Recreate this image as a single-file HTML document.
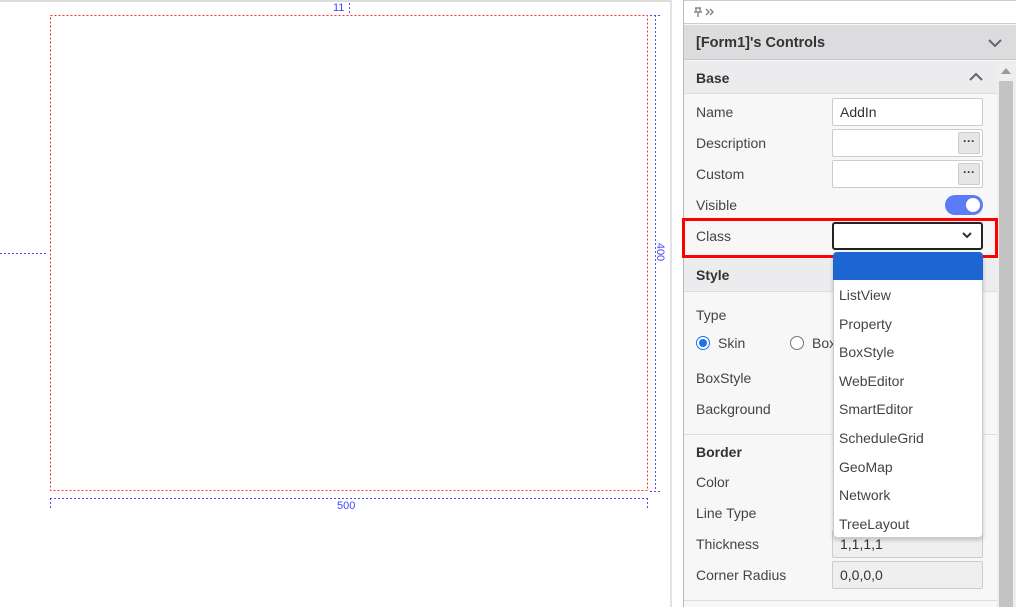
<!DOCTYPE html>
<html><head><style>
*{margin:0;padding:0;box-sizing:border-box}
body{width:1016px;height:607px;overflow:hidden;background:#fff;font-family:"Liberation Sans","Noto Sans CJK KR",sans-serif;position:relative;color:#333}
.a{position:absolute}
.lbl{position:absolute;left:696px;font-size:14px;color:#444}
.inp{position:absolute;left:832px;width:151px;height:28px;border:1px solid #ccc;background:#fff;border-radius:2px;font-size:14px;padding:5px 7px;color:#333}
.dots{position:absolute;right:2px;top:2px;width:22px;height:22px;background:#e6e6e6;border:1px solid #ccc;border-radius:2px;font-size:12px;text-align:center;line-height:16px;font-weight:bold}
.item{position:absolute;left:839px;font-size:14px;color:#444}
.sec{position:absolute;left:696px;font-size:14px;font-weight:bold;color:#333}
</style></head><body>
<div class="a" style="left:0;top:0;width:670px;height:2px;background:#ddd"></div>
<svg class="a" style="left:0;top:0" width="670" height="520" shape-rendering="crispEdges">
<g fill="none" stroke-width="1" stroke-dasharray="2,2">
<rect x="50.5" y="15.5" width="597" height="475" stroke="#ff3030"/>
<g stroke="#4a4aff">
<line x1="655.5" y1="15" x2="655.5" y2="492"/>
<line x1="650" y1="15.5" x2="662" y2="15.5"/>
<line x1="650" y1="491.5" x2="662" y2="491.5"/>
<line x1="50" y1="498.5" x2="648" y2="498.5"/>
<line x1="50.5" y1="498" x2="50.5" y2="508"/>
<line x1="647.5" y1="498" x2="647.5" y2="508"/>
<line x1="0" y1="253.5" x2="48" y2="253.5"/>
<line x1="349.5" y1="3" x2="349.5" y2="13"/>
</g></g></svg>
<div class="a" style="left:333px;top:2px;font-size:11px;color:#44f">11</div>
<div class="a" style="left:337px;top:500px;font-size:11px;color:#44f">500</div>
<div class="a" style="left:651px;top:246px;font-size:11px;color:#44f;transform:rotate(90deg)">400</div>
<div class="a" style="left:670px;top:0;width:2px;height:607px;background:#e3e3e3"></div>
<!-- panel -->
<div class="a" style="left:683px;top:0;width:333px;height:607px;background:#f7f7f8;border-left:1px solid #bbb"></div>
<div class="a" style="left:684px;top:0;width:332px;height:24px;background:#fff;border-bottom:1px solid #ccc;border-top:1px solid #ccc"></div>
<svg class="a" style="left:694px;top:7px" width="24" height="10"><path d="M1 1h6M2 1v4h4v-4M0 5h8M4 5v5" stroke="#888" stroke-width="1.5" fill="none"/><path d="M12 2l3 3-3 3M16 2l3 3-3 3" stroke="#888" stroke-width="1.5" fill="none"/></svg>
<div class="a" style="left:684px;top:25px;width:332px;height:35px;background:#dcdcdf;border-bottom:1px solid #c8c8c8"></div>
<div class="sec" style="top:35px;font-size:14.5px">[Form1]'s Controls</div>
<svg class="a" style="left:988px;top:38px" width="14" height="10"><path d="M1 2l6 6 6-6" stroke="#666" stroke-width="2" fill="none"/></svg>
<div class="a" style="left:684px;top:61px;width:313px;height:33px;background:#ececef;border-bottom:1px solid #ddd"></div>
<div class="sec" style="top:70px">Base</div>
<svg class="a" style="left:969px;top:72px" width="14" height="10"><path d="M1 8l6-6 6 6" stroke="#666" stroke-width="2" fill="none"/></svg>
<div class="a" style="left:997px;top:61px;width:19px;height:546px;background:#eee"></div>
<div class="a" style="left:999px;top:81px;width:14px;height:526px;background:#c3c3c3"></div>
<svg class="a" style="left:1001px;top:68px" width="10" height="6"><path d="M0 6L5 0L10 6Z" fill="#999"/></svg>

<div class="lbl" style="top:104px">Name</div>
<div class="inp" style="top:98px">AddIn</div>
<div class="lbl" style="top:135px">Description</div>
<div class="inp" style="top:129px"><div class="dots">···</div></div>
<div class="lbl" style="top:166px">Custom</div>
<div class="inp" style="top:160px"><div class="dots">···</div></div>
<div class="lbl" style="top:197px">Visible</div>
<div class="a" style="left:945px;top:195px;width:38px;height:20px;border-radius:10px;background:#5b7cf5"></div>
<div class="a" style="left:966px;top:198px;width:14px;height:14px;border-radius:7px;background:#fff"></div>
<div class="lbl" style="top:228px">Class</div>
<div class="a" style="left:832px;top:222px;width:151px;height:28px;border:2px solid #222;border-radius:3px;background:#fff"></div>
<svg class="a" style="left:962px;top:232px" width="10" height="7"><path d="M1 1l4 4 4-4" stroke="#333" stroke-width="2" fill="none"/></svg>
<div class="a" style="left:682px;top:218px;width:316px;height:40px;border:3px solid #f00"></div>

<div class="a" style="left:684px;top:259px;width:313px;height:33px;background:#ececef;border-bottom:1px solid #ddd"></div>
<div class="sec" style="top:267px">Style</div>
<div class="lbl" style="top:307px">Type</div>
<div class="a" style="left:696px;top:336px;width:14px;height:14px;border-radius:7px;border:1px solid #1a73e8;background:#fff"></div>
<div class="a" style="left:699px;top:339px;width:8px;height:8px;border-radius:4px;background:#1a73e8"></div>
<div class="lbl" style="top:335px;left:718px">Skin</div>
<div class="a" style="left:790px;top:336px;width:14px;height:14px;border-radius:7px;border:1px solid #777;background:#fff"></div>
<div class="lbl" style="top:335px;left:812px">Box</div>
<div class="lbl" style="top:370px">BoxStyle</div>
<div class="lbl" style="top:401px">Background</div>
<div class="a" style="left:684px;top:434px;width:313px;height:1px;background:#ddd"></div>
<div class="sec" style="top:444px">Border</div>
<div class="lbl" style="top:474px">Color</div>
<div class="lbl" style="top:505px">Line Type</div>
<div class="lbl" style="top:536px">Thickness</div>
<div class="inp" style="top:530px;background:#efefef">1,1,1,1</div>
<div class="lbl" style="top:567px">Corner Radius</div>
<div class="inp" style="top:561px;background:#efefef">0,0,0,0</div>
<div class="a" style="left:684px;top:600px;width:313px;height:1px;background:#ddd"></div>

<div class="a" style="left:833px;top:252px;width:150px;height:286px;background:#fff;border:1px solid #ccc;border-radius:4px;box-shadow:0 2px 4px rgba(0,0,0,.2)"></div>
<div class="a" style="left:833px;top:252px;width:150px;height:28px;background:#1c66d3;border-radius:4px 4px 0 0"></div>
<div class="item" style="top:287px">ListView</div>
<div class="item" style="top:316px">Property</div>
<div class="item" style="top:344px">BoxStyle</div>
<div class="item" style="top:373px">WebEditor</div>
<div class="item" style="top:401px">SmartEditor</div>
<div class="item" style="top:430px">ScheduleGrid</div>
<div class="item" style="top:459px">GeoMap</div>
<div class="item" style="top:487px">Network</div>
<div class="item" style="top:516px">TreeLayout</div>
</body></html>
